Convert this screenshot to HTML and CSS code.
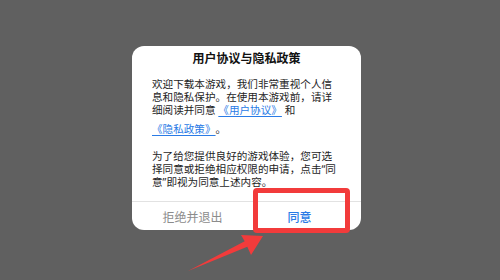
FILE: index.html
```html
<!DOCTYPE html>
<html lang="zh-CN">
<head>
<meta charset="utf-8">
<link rel="stylesheet" href="styles.css">
</head>
<body>
<div class="stage">
  <div class="dialog">
    <h1 class="title">用户协议与隐私政策</h1>
    <div class="content">
      <p class="para">欢迎下载本游戏，我们非常重视个人信<br>息和隐私保护。在使用本游戏前，请详<br>细阅读并同意 <a class="link">《用户协议》</a> 和<br> <a class="link link-next">《隐私政策》</a>。</p>
      <p class="para">为了给您提供良好的游戏体验，您可选<br>择同意或拒绝相应权限的申请，点击“同<br>意”即视为同意上述内容。</p>
    </div>
    <div class="actions">
      <div class="btn btn-cancel">拒绝并退出</div>
      <div class="btn btn-ok">同意</div>
    </div>
  </div>
  <div class="highlight"></div>
  <svg class="arrow" width="500" height="280" viewBox="0 0 500 280">
    <polygon points="188,271 244.7,241.3 241,235 263,236 251,255 247.3,246.7" fill="#f23b3b"/>
  </svg>
</div>
</body>
</html>
```

FILE: styles.css
```css
html, body {
  margin: 0;
  padding: 0;
}
body {
  width: 500px;
  height: 280px;
  background: #606060;
  overflow: hidden;
  font-family: "Noto Sans CJK SC", "Noto Sans", sans-serif;
}
.stage {
  position: relative;
  width: 500px;
  height: 280px;
  padding: 46px 0 0 132px;
  box-sizing: border-box;
}
.dialog {
  width: 229px;
  height: 184px;
  background: #ffffff;
  border-radius: 12px;
  display: flex;
  flex-direction: column;
  overflow: hidden;
}
.title {
  margin: 0;
  padding-top: 3px;
  font-size: 12px;
  line-height: 18px;
  font-weight: 700;
  color: #111111;
  text-align: center;
}
.content {
  padding: 11px 0 0 20px;
  flex: 1;
}
.para {
  margin: 0 0 12px 0;
  font-family: "Noto Sans", "Noto Sans CJK SC", sans-serif;
  font-size: 10.6px;
  line-height: 13px;
  color: #1e1e1e;
  white-space: nowrap;
}
.link {
  color: #2a7be6;
  text-decoration: underline;
  text-underline-offset: 2px;
  display: inline-block;
  padding-bottom: 2px;
}
.link-next {
  margin-top: 4px;
}
.actions {
  display: flex;
  height: 33px;
  border-top: 1px solid #e2e2e2;
}
.btn {
  flex: 1;
  display: flex;
  align-items: center;
  justify-content: center;
  font-size: 12px;
}
.btn-cancel {
  color: #8c8c8c;
  padding-left: 7px;
}
.btn-ok {
  color: #2a7be6;
  font-weight: 500;
  padding-right: 8px;
}
.highlight {
  position: absolute;
  left: 253px;
  top: 188px;
  width: 97px;
  height: 45px;
  box-sizing: border-box;
  border: 5px solid #f23b3b;
  border-radius: 4px;
}
.arrow {
  position: absolute;
  left: 0;
  top: 0;
}
```
